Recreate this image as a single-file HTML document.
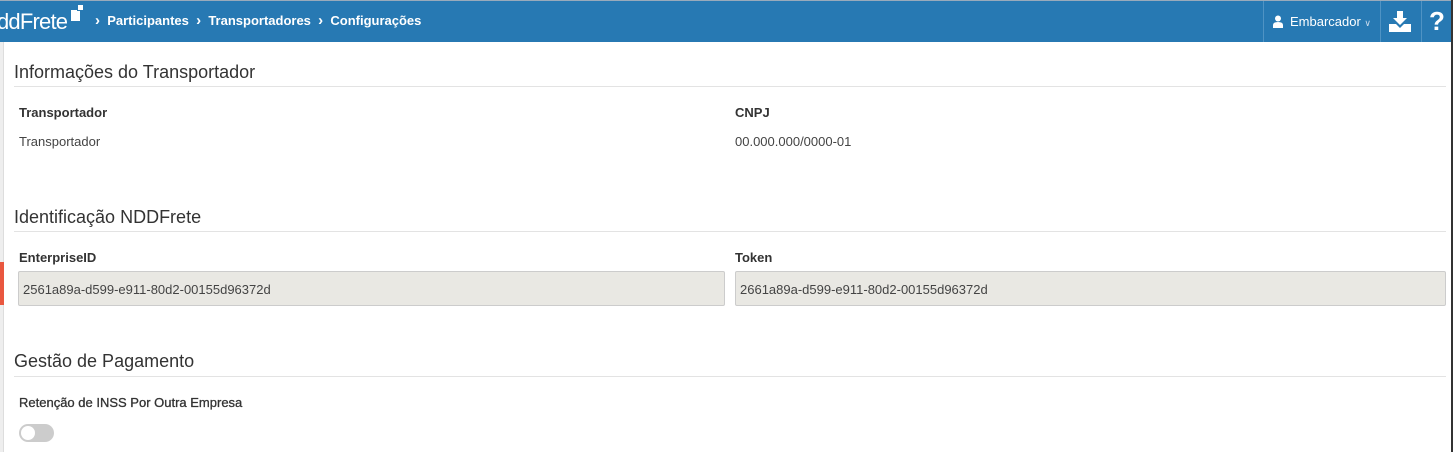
<!DOCTYPE html>
<html><head><meta charset="utf-8"><style>
*{box-sizing:border-box;margin:0;padding:0}
body{width:1453px;height:452px;overflow:hidden;background:#fff;font-family:"Liberation Sans",sans-serif;color:#333;position:relative}
.hdr{position:absolute;left:0;top:0;width:1453px;height:42px;background:#2779b3;border-top:1px solid #9ab}
.abs{position:absolute;white-space:nowrap}
.logo{left:-3px;top:9px;color:#fff;font-size:22px;letter-spacing:-0.8px}
.crumb{top:13px;color:#fff;font-size:13px;font-weight:bold}
.sep{position:absolute;top:1px;width:1px;height:41px;background:#4f93c4}
.title{left:14px;font-size:18px;color:#333}
.line{position:absolute;left:14px;width:1432px;height:1px;background:#e3e3e3}
.lbl{font-size:13px;font-weight:bold;color:#333}
.val{font-size:13px;color:#444}
.inp{position:absolute;top:271px;height:35px;background:#e9e8e3;border:1px solid #ccc;border-radius:2px;font-size:13px;color:#444;padding:10px 0 0 4px}
</style></head><body>
<div class="hdr"></div>
<div class="abs logo">ddFrete</div>
<div class="abs" style="left:71px;top:10px;width:9px;height:11px;background:#fff"></div>
<div class="abs" style="left:77px;top:5px;width:6px;height:6px;background:#fff;border-left:1px solid #2779b3;border-bottom:1px solid #2779b3"></div>
<div class="abs crumb" style="left:95px;top:12px"><span style="font-size:15px">›</span>&nbsp; Participantes &nbsp;<span style="font-size:15px">›</span>&nbsp; Transportadores &nbsp;<span style="font-size:15px">›</span>&nbsp; Configurações</div>
<div class="sep" style="left:1263px"></div>
<div class="sep" style="left:1380px"></div>
<div class="sep" style="left:1421px"></div>
<svg class="abs" style="left:1273px;top:15px" width="10" height="13" viewBox="0 0 10 13"><circle cx="5" cy="3.5" r="3" fill="#fff"/><path d="M0 13V10Q0 7 5 7Q10 7 10 10V13Z" fill="#fff"/></svg>
<div class="abs" style="left:1290px;top:14px;color:#fff;font-size:13px">Embarcador <span style="font-size:9px;color:#cde">∨</span></div>
<svg class="abs" style="left:1389px;top:11px" width="22" height="21" viewBox="0 0 22 21"><path d="M8 0H14V7H18L11 14L4 7H8Z" fill="#fff"/><path d="M0 13H7L11 17L15 13H22V21H0Z" fill="#fff"/></svg>
<div class="abs" style="left:1429px;top:6px;color:#fff;font-size:26px;font-weight:bold">?</div>
<div class="abs" style="left:1451px;top:0;width:2px;height:452px;background:#333"></div>
<div class="abs" style="left:0;top:42px;width:4px;height:410px;background:#eee;border-right:1px solid #ddd"></div>
<div class="abs" style="left:0;top:262px;width:4px;height:43px;background:#e9573f"></div>

<div class="abs title" style="top:62px">Informações do Transportador</div>
<div class="line" style="top:86px"></div>
<div class="abs lbl" style="left:19px;top:105px">Transportador</div>
<div class="abs val" style="left:19px;top:134px">Transportador</div>
<div class="abs lbl" style="left:735px;top:105px">CNPJ</div>
<div class="abs val" style="left:735px;top:134px">00.000.000/0000-01</div>

<div class="abs title" style="top:207px">Identificação NDDFrete</div>
<div class="line" style="top:231px"></div>
<div class="abs lbl" style="left:19px;top:250px">EnterpriseID</div>
<div class="abs lbl" style="left:735px;top:250px">Token</div>
<div class="inp" style="left:18px;width:707px">2561a89a-d599-e911-80d2-00155d96372d</div>
<div class="inp" style="left:735px;width:711px">2661a89a-d599-e911-80d2-00155d96372d</div>

<div class="abs title" style="top:351px">Gestão de Pagamento</div>
<div class="line" style="top:376px"></div>
<div class="abs lbl" style="left:19px;top:395px;font-weight:normal;color:#333;-webkit-text-stroke:0.3px #333">Retenção de INSS Por Outra Empresa</div>
<div class="abs" style="left:19px;top:424px;width:35px;height:18px;border-radius:9px;background:#ccc"></div>
<div class="abs" style="left:21px;top:426px;width:14px;height:14px;border-radius:50%;background:#fff"></div>
</body></html>
